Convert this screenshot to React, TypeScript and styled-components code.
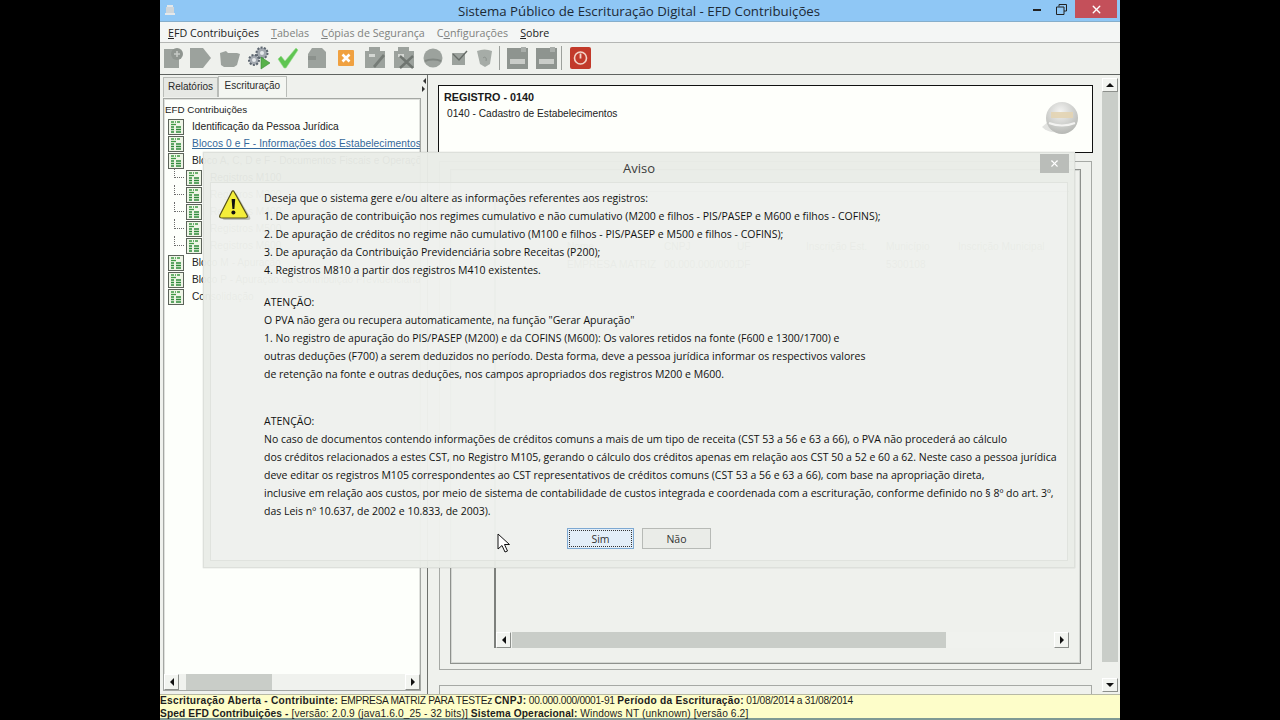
import React from 'react';
import styled, { createGlobalStyle } from 'styled-components';
import { X } from 'lucide-react';

const GlobalStyle = createGlobalStyle`
  html, body {
    margin: 0;
    padding: 0;
    background: #000;
    overflow: hidden;
  }
  * {
    box-sizing: border-box;
  }
`;

const UI_FONT = `"Open Sans", "Noto Sans", sans-serif`;
const SWING_FONT = `"Liberation Sans", Arial, sans-serif`;

const Window = styled.div`
  position: relative;
  width: 960px;
  height: 720px;
  margin: 0 auto;
  display: flex;
  flex-direction: column;
  background: #eff1ed;
  overflow: hidden;
  font-family: ${SWING_FONT};
`;

const TitleBar = styled.div`
  position: relative;
  height: 22px;
  flex: none;
  display: flex;
  align-items: center;
  justify-content: center;
  padding-right: 2px;
  background: #8fc7f5;
  border-bottom: 1px solid #86aecb;
  color: #1d2a35;
  font-family: ${UI_FONT};
  font-size: 13.25px;
`;

const AppGlyph = styled.svg`
  position: absolute;
  left: 5px;
  top: 4px;
`;

const WindowControls = styled.div`
  position: absolute;
  right: 3px;
  top: 0;
  height: 18px;
  display: flex;
  align-items: center;
  gap: 8px;
`;

const MinimizeGlyph = styled.svg`
  display: block;
  margin-right: 7px;
`;

const RestoreGlyph = styled.svg`
  display: block;
`;

const CloseControl = styled.div`
  width: 42px;
  height: 18px;
  display: flex;
  align-items: center;
  justify-content: center;
  background: #c4505a;
  color: #fff;
`;

const MenuBar = styled.div`
  height: 20px;
  flex: none;
  display: flex;
  align-items: center;
  gap: 12px;
  padding: 1px 0 0 8px;
  background: #f4f6f5;
  font-family: ${UI_FONT};
  font-size: 10.7px;
`;

const MenuItem = styled.span<{ $off?: boolean }>`
  color: ${({ $off }) => ($off ? '#7f8280' : '#222')};
  u {
    text-underline-offset: 1px;
  }
`;

const ToolBar = styled.div`
  height: 32px;
  flex: none;
  display: flex;
  align-items: center;
  border-top: 1px solid #b4b6b4;
  padding-bottom: 2px;
  background: #eff1ed;
`;

const ToolSlot = styled.div<{ $w: number }>`
  width: ${({ $w }) => $w}px;
  flex: none;
  display: flex;
  justify-content: center;
  align-items: center;
`;

const ToolSep = styled.div`
  width: 1px;
  height: 24px;
  flex: none;
  background: #9ca09c;
`;

const Main = styled.div`
  flex: 1;
  min-height: 0;
  display: flex;
  border-top: 1px solid #5f6360;
`;

const LeftPane = styled.div`
  width: 262px;
  flex: none;
  display: flex;
  flex-direction: column;
  padding: 1px 0 3px 3px;
`;

const Tabs = styled.div`
  display: flex;
  align-items: flex-end;
  height: 21px;
  flex: none;
`;

const Tab = styled.div<{ $active?: boolean }>`
  height: ${({ $active }) => ($active ? '21px' : '20px')};
  display: flex;
  align-items: center;
  padding: 0 ${({ $active }) => ($active ? '5.5px' : '4px')} 3px;
  font-size: 10px;
  color: #2a2a2a;
  border: 1px solid #b9bcb8;
  border-bottom: none;
  background: ${({ $active }) => ($active ? '#f4f6f2' : '#e6e8e4')};
`;

const TreeBox = styled.div`
  flex: 1;
  min-height: 0;
  margin-top: 1px;
  width: 258px;
  display: flex;
  flex-direction: column;
  background: #fdfffb;
  border: 1px solid #a5a8a4;
  box-shadow: inset 0 0 0 1px #dfe1dd;
`;

const TreeList = styled.div`
  flex: 1;
  min-height: 0;
  overflow: hidden;
  padding: 2px 0 0 1px;
  font-size: 10.2px;
  color: #222;
`;

const TreeRoot = styled.div`
  height: 17px;
  display: flex;
  align-items: center;
  font-size: 9.8px;
`;

const TreeRow = styled.div<{ $child?: boolean }>`
  position: relative;
  height: 17px;
  display: flex;
  align-items: center;
  gap: 8px;
  white-space: nowrap;
  padding-left: ${({ $child }) => ($child ? '21px' : '3px')};
`;

const TreeLink = styled.span`
  flex: 1;
  overflow: hidden;
  color: #34689b;
  text-decoration: underline;
  letter-spacing: 0.1px;
`;

const TreeLabel = styled.span``;

const Connector = styled.i`
  position: absolute;
  left: 9px;
  top: -1px;
  bottom: 8px;
  width: 10px;
  border-left: 1px dotted #6b6b6b;
  border-bottom: 1px dotted #6b6b6b;
`;

const TreeIconBox = styled.svg`
  flex: none;
  display: block;
`;

const HScroll = styled.div`
  height: 16px;
  flex: none;
  display: flex;
  align-items: stretch;
  background: #f0f2ee;
`;

const HScrollSpace = styled.div<{ $offset: number }>`
  flex: 1;
  padding-left: ${({ $offset }) => $offset}px;
  display: flex;
  min-width: 0;
`;

const HThumb = styled.div<{ $w: number }>`
  width: ${({ $w }) => $w}px;
  background: #c9cdc8;
`;

const ScrollBtn = styled.div<{ $dir: 'left' | 'right' | 'up' | 'down' }>`
  width: 15px;
  height: 100%;
  flex: none;
  display: flex;
  align-items: center;
  justify-content: center;
  background: #f2f4f0;
  border: 1px solid #fff;
  border-right-color: #8c8f8b;
  border-bottom-color: #8c8f8b;
  &::after {
    content: '';
    width: 0;
    height: 0;
    border-style: solid;
    border-color: transparent;
    border-width: ${({ $dir }) =>
      $dir === 'left' || $dir === 'right' ? '4px 0 4px 0' : '0 4px 0 4px'};
    ${({ $dir }) => $dir === 'left' && 'border-right: 4px solid #111;'}
    ${({ $dir }) => $dir === 'right' && 'border-left: 4px solid #111;'}
    ${({ $dir }) => $dir === 'up' && 'border-bottom: 4px solid #111;'}
    ${({ $dir }) => $dir === 'down' && 'border-top: 4px solid #111;'}
  }
`;

const Splitter = styled.div`
  width: 6px;
  flex: none;
  display: flex;
  flex-direction: column;
  align-items: flex-start;
  gap: 2px;
  padding-top: 3px;
  border-right: 1px solid #6d706c;
`;

const SplitArrow = styled.i<{ $right?: boolean }>`
  width: 0;
  height: 0;
  border-style: solid;
  border-color: transparent;
  border-width: 3px 0;
  ${({ $right }) =>
    $right ? 'border-left: 3px solid #333;' : 'border-right: 3px solid #333; margin-left: 1px;'}
`;

const RightPane = styled.div`
  flex: 1;
  min-width: 0;
  display: flex;
`;

const ContentArea = styled.div`
  flex: 1;
  min-width: 0;
  overflow: hidden;
  padding: 10px 0 0 10px;
  display: flex;
  flex-direction: column;
`;

const RecordHeader = styled.div`
  width: 655px;
  height: 68px;
  flex: none;
  position: relative;
  padding: 5px 5px;
  background: #fefffb;
  border: 1px solid #111;
`;

const RecordTitle = styled.div`
  font-size: 10.8px;
  font-weight: 700;
  color: #1a1a1a;
`;

const RecordSub = styled.div`
  margin: 5px 0 0 3px;
  font-size: 10.2px;
  color: #222;
`;

const Sphere = styled.svg`
  position: absolute;
  right: 11px;
  top: 15px;
`;

const OuterFrame = styled.div`
  width: 653px;
  height: 509px;
  flex: none;
  margin: 8px 0 0 1px;
  padding: 7px 9px 5px 10px;
  border: 1px solid #a6a9a5;
`;

const InnerFrame = styled.div`
  width: 631px;
  height: 100%;
  padding: 21px 11px 15px 43px;
  background: #eff1ed;
  border: 1px solid #8e918d;
  box-shadow: inset 0 0 0 1px #d4d7d3;
  display: flex;
`;

const GridFrame = styled.div`
  flex: 1;
  min-width: 0;
  display: flex;
  flex-direction: column;
  border-left: 2px solid #7d807c;
  border-top: 1px solid #9a9d99;
`;

const GridBody = styled.div`
  flex: 1;
  min-height: 0;
  padding: 45px 0 0 71px;
  font-size: 10.2px;
  color: #333;
`;

const GridRow = styled.div`
  display: grid;
  grid-template-columns: 97px 73px 69px 80px 72px 1fr;
  height: 18px;
  align-items: center;
  white-space: nowrap;
  span {
    overflow: hidden;
  }
`;

const NextFrame = styled.div`
  width: 653px;
  height: 20px;
  flex: none;
  margin: 15px 0 0 1px;
  border: 1px solid #a6a9a5;
`;

const VScroll = styled.div`
  width: 16px;
  flex: none;
  margin-right: 2px;
  padding-top: 3px;
  padding-bottom: 2px;
  display: flex;
  flex-direction: column;
`;

const VBtn = styled(ScrollBtn)`
  width: 100%;
  height: 14px;
`;

const VThumb = styled.div`
  height: 570px;
  flex: none;
  background: #c9cdc8;
`;

const VTrack = styled.div`
  flex: 1;
  background: #eff1ed;
`;

const StatusBar = styled.div`
  height: 26px;
  flex: none;
  background: #fdfdc9;
  border-top: 1px solid #b7b9a5;
  border-bottom: 2px solid #7f9a94;
  font-size: 10.2px;
  line-height: 13px;
  color: #1d1d1d;
  white-space: nowrap;
  b {
    font-weight: 700;
  }
`;

const StatusFirstLine = styled.div`
  margin-top: -1px;
  letter-spacing: -0.3px;
  b {
    letter-spacing: 0.25px;
  }
`;

const StatusSecondLine = styled.div`
  letter-spacing: 0.12px;
`;

const Dialog = styled.div`
  position: absolute;
  left: 43px;
  top: 152px;
  width: 872px;
  height: 416px;
  padding: 0 6px 6px;
  display: flex;
  flex-direction: column;
  background: rgba(233, 236, 231, 0.96);
  border: 1px solid #dde0db;
  box-shadow: 0 0 1px rgba(150, 150, 150, 0.5);
`;

const DialogTitle = styled.div`
  position: relative;
  height: 29px;
  flex: none;
  display: flex;
  align-items: center;
  justify-content: center;
  font-family: ${UI_FONT};
  font-size: 13px;
  color: #3b3b3b;
`;

const DialogClose = styled.div`
  position: absolute;
  right: -1px;
  top: 1px;
  width: 29px;
  height: 19px;
  display: flex;
  align-items: center;
  justify-content: center;
  background: #babdb9;
  color: #fff;
`;

const DialogBody = styled.div`
  flex: 1;
  min-height: 0;
  display: flex;
  flex-direction: column;
  padding: 5px 0 0 8px;
  background: rgba(255, 255, 255, 0.25);
  border: 1px solid #e0e3de;
`;

const MessageRow = styled.div`
  display: flex;
  gap: 11px;
  flex: none;
`;

const WarnIcon = styled.svg`
  flex: none;
  margin-top: 2px;
`;

const Message = styled.div`
  padding-top: 1px;
  font-family: ${UI_FONT};
  font-size: 10.5px;
  line-height: 18px;
  color: #111;
  white-space: nowrap;
`;

const Paragraph = styled.div<{ $gap?: number }>`
  margin-top: ${({ $gap }) => $gap ?? 0}px;
`;

const DialogActions = styled.div`
  display: flex;
  justify-content: center;
  gap: 8px;
  margin-top: 8px;
  padding-right: 8px;
`;

const DialogButton = styled.div<{ $focus?: boolean }>`
  width: ${({ $focus }) => ($focus ? '67px' : '69px')};
  height: 21px;
  display: flex;
  align-items: center;
  justify-content: center;
  font-family: ${UI_FONT};
  font-size: 10.5px;
  color: #333;
  background: ${({ $focus }) => ($focus ? '#e3eef8' : '#eaece8')};
  border: 1px solid ${({ $focus }) => ($focus ? '#7ea9d2' : '#b7bab6')};
  outline: ${({ $focus }) => ($focus ? '1px dotted #333' : 'none')};
  outline-offset: -3px;
`;

const Pointer = styled.svg`
  position: absolute;
  left: 337px;
  top: 533px;
`;

const TreeIcon = () => (
  <TreeIconBox width="16" height="16" viewBox="0 0 16 16">
    <rect x="0.5" y="0.5" width="15" height="15" fill="#eef5e6" stroke="#5c635a" />
    <path d="M3 3h3M7 3h1M9 3h3" stroke="#3f9a45" strokeWidth="1.3" />
    <path d="M3 5.5h5" stroke="#3f9a45" strokeWidth="1.3" />
    <path d="M3 8h3M8 8h5M3 10.5h3M8 10.5h5M3 13h3M8 13h5" stroke="#2f8a3b" strokeWidth="1.3" />
  </TreeIconBox>
);

const GRAY = '#9ca29d';

function FloppyIcon() {
  return (
    <svg width="21" height="22" viewBox="0 0 21 22">
      <path d="M0 1h21v21H0z" fill="#8e948f" />
      <path d="M14 0h5v5h-5z" fill="#a9aeaa" />
      <path d="M3 12h15v5H3z" fill="#c9ccc8" />
    </svg>
  );
}

const toolIcons: { w: number; node?: React.ReactNode; sep?: boolean }[] = [
  {
    w: 26,
    node: (
      <svg width="22" height="24" viewBox="0 0 22 24">
        <path d="M2 3h10l5 5v14H2z" fill={GRAY} />
        <circle cx="15" cy="8" r="6" fill="#8f9590" />
        <path d="M12 8h6M15 5v6" stroke="#c5c9c5" strokeWidth="1.6" />
      </svg>
    ),
  },
  {
    w: 29,
    node: (
      <svg width="23" height="22" viewBox="0 0 23 22">
        <path d="M1 1h13l8 10-8 10H1z" fill={GRAY} />
      </svg>
    ),
  },
  {
    w: 29,
    node: (
      <svg width="22" height="20" viewBox="0 0 22 20">
        <path d="M1 5l6-2 2 2h9l3 1-3 11-3 2H5l-3-2z" fill={GRAY} />
      </svg>
    ),
  },
  {
    w: 29,
    node: (
      <svg width="24" height="24" viewBox="0 0 24 24">
        <circle cx="15" cy="7" r="5.5" fill="#a3a9b0" stroke="#5d6670" strokeDasharray="2 1.4" strokeWidth="2" />
        <circle cx="15" cy="7" r="2" fill="#e6e9ec" />
        <circle cx="7" cy="14" r="5" fill="#a3a9b0" stroke="#5d6670" strokeDasharray="2 1.4" strokeWidth="2" />
        <circle cx="7" cy="14" r="2" fill="#e6e9ec" />
        <path d="M14 11l9 6-9 6z" fill="#58b14a" stroke="#3a8a35" strokeWidth="0.6" />
      </svg>
    ),
  },
  {
    w: 29,
    node: (
      <svg width="22" height="22" viewBox="0 0 22 22">
        <path d="M1 12l3-3 4 5L19 1l2 2L9 21h-2z" fill="#5fc552" stroke="#9bdc8f" strokeWidth="0.6" />
      </svg>
    ),
  },
  {
    w: 29,
    node: (
      <svg width="20" height="22" viewBox="0 0 20 22">
        <path d="M5 1h10l4 4v16H1V7z" fill={GRAY} />
        <path d="M1 9h8v4H1z" fill="#8b918c" />
      </svg>
    ),
  },
  {
    w: 29,
    node: (
      <svg width="16" height="16" viewBox="0 0 16 16">
        <rect width="16" height="16" rx="1" fill="#f0a140" />
        <path d="M4.5 4.5l7 7M11.5 4.5l-7 7" stroke="#fff" strokeWidth="2.6" />
      </svg>
    ),
  },
  {
    w: 29,
    node: (
      <svg width="22" height="23" viewBox="0 0 22 23">
        <path d="M1 5h4V1h11v4h5v17H1z" fill={GRAY} />
        <path d="M5 8h6v3H5z" fill="#d4d7d3" />
        <path d="M9 20l10-12 2 2-10 12z" fill="#767c77" />
      </svg>
    ),
  },
  {
    w: 29,
    node: (
      <svg width="22" height="23" viewBox="0 0 22 23">
        <path d="M1 5h4V1h11v4h5v17H1z" fill={GRAY} />
        <path d="M5 8h6v3H5z" fill="#d4d7d3" />
        <path d="M7 10l13 12M20 10L7 22" stroke="#6f7570" strokeWidth="2.4" />
      </svg>
    ),
  },
  {
    w: 29,
    node: (
      <svg width="20" height="20" viewBox="0 0 20 20">
        <circle cx="10" cy="10" r="9.5" fill={GRAY} />
        <path d="M2 13c4-2 12-2 16 0" stroke="#818782" fill="none" strokeWidth="2" />
      </svg>
    ),
  },
  {
    w: 25,
    node: (
      <svg width="16" height="15" viewBox="0 0 16 15">
        <path d="M0 3h13v12H0z" fill={GRAY} />
        <path d="M1 4l6 6 8-9" stroke="#666c67" strokeWidth="1.4" fill="none" />
      </svg>
    ),
  },
  {
    w: 25,
    node: (
      <svg width="15" height="18" viewBox="0 0 15 18">
        <path d="M0 2c5-2 10-2 15 0l-2 13-5 3-5-3z" fill="#a6aca7" />
        <path d="M6 9c2-2 4 0 3 3" stroke="#8b918c" fill="none" />
      </svg>
    ),
  },
  { w: 2 },
  { w: 1, sep: true },
  { w: 3 },
  { w: 29, node: <FloppyIcon /> },
  { w: 29, node: <FloppyIcon /> },
  { w: 1, sep: true },
  { w: 6 },
  {
    w: 25,
    node: (
      <svg width="21" height="22" viewBox="0 0 21 22">
        <rect width="21" height="22" rx="2" fill="#c23a2a" />
        <circle cx="10.5" cy="11" r="6" fill="none" stroke="#f3d5c8" strokeWidth="1.6" />
        <path d="M10.5 6.5v5" stroke="#f3d5c8" strokeWidth="1.8" />
      </svg>
    ),
  },
];

const treeRows = [
  { label: 'Identificação da Pessoa Jurídica' },
  { label: 'Blocos 0 e F - Informações dos Estabelecimentos e Fontes Pagadoras', link: true },
  { label: 'Bloco A, C, D e F - Documentos Fiscais e Operações' },
  { label: 'Registros M100', child: true },
  { label: 'Registros M200', child: true },
  { label: 'Registros M400', child: true },
  { label: 'Registros M500', child: true },
  { label: 'Registros M600', child: true },
  { label: 'Bloco M - Apuração' },
  { label: 'Bloco P - Apuração da Contribuição Previdenciária' },
  { label: 'Consolidação' },
];

const intro = [
  'Deseja que o sistema gere e/ou altere as informações referentes aos registros:',
  '1. De apuração de contribuição nos regimes cumulativo e não cumulativo (M200 e filhos - PIS/PASEP e M600 e filhos - COFINS);',
  '2. De apuração de créditos no regime não cumulativo (M100 e filhos - PIS/PASEP e M500 e filhos - COFINS);',
  '3. De apuração da Contribuição Previdenciária sobre Receitas (P200);',
  '4. Registros M810 a partir dos registros M410 existentes.',
];

const firstNote = [
  'ATENÇÃO:',
  'O PVA não gera ou recupera automaticamente, na função "Gerar Apuração"',
  '1. No registro de apuração do PIS/PASEP (M200) e da COFINS (M600): Os valores retidos na fonte (F600 e 1300/1700) e',
  'outras deduções (F700) a serem deduzidos no período. Desta forma, deve a pessoa jurídica informar os respectivos valores',
  'de retenção na fonte e outras deduções, nos campos apropriados dos registros M200 e M600.',
];

const secondNote = [
  'ATENÇÃO:',
  'No caso de documentos contendo informações de créditos comuns a mais de um tipo de receita (CST 53 a 56 e 63 a 66), o PVA não procederá ao cálculo',
  'dos créditos relacionados a estes CST, no Registro M105, gerando o cálculo dos créditos apenas em relação aos CST 50 a 52 e 60 a 62. Neste caso a pessoa jurídica',
  'deve editar os registros M105 correspondentes ao CST representativos de créditos comuns (CST 53 a 56 e 63 a 66), com base na apropriação direta,',
  'inclusive em relação aos custos, por meio de sistema de contabilidade de custos integrada e coordenada com a escrituração, conforme definido no § 8º do art. 3º,',
  'das Leis nº 10.637, de 2002 e 10.833, de 2003).',
];

export default function App() {
  return (
    <>
      <GlobalStyle />
      <Window>
        <TitleBar>
          <AppGlyph width="10" height="12" viewBox="0 0 10 12">
            <path d="M1 3h8v6H1z" fill="#cfd6da" />
            <path d="M2 1h6v2H2zM0 9h10v2H0z" fill="#e4e8ea" />
          </AppGlyph>
          Sistema Público de Escrituração Digital - EFD Contribuições
          <WindowControls>
            <MinimizeGlyph width="8" height="3" viewBox="0 0 8 3">
              <rect width="8" height="2" y="1" fill="#222" />
            </MinimizeGlyph>
            <RestoreGlyph width="11" height="11" viewBox="0 0 11 11">
              <path d="M3 2.5V.5h7.5v6.5H8M.5 3h7.5v7.5H.5z" fill="none" stroke="#222" />
            </RestoreGlyph>
            <CloseControl>
              <X size={13} strokeWidth={2.6} />
            </CloseControl>
          </WindowControls>
        </TitleBar>

        <MenuBar>
          <MenuItem><u>E</u>FD Contribuições</MenuItem>
          <MenuItem $off><u>T</u>abelas</MenuItem>
          <MenuItem $off><u>C</u>ópias de Segurança</MenuItem>
          <MenuItem $off>C<u>o</u>nfigurações</MenuItem>
          <MenuItem><u>S</u>obre</MenuItem>
        </MenuBar>

        <ToolBar>
          {toolIcons.map((tool, i) =>
            tool.sep ? <ToolSep key={i} /> : <ToolSlot key={i} $w={tool.w}>{tool.node}</ToolSlot>
          )}
        </ToolBar>

        <Main>
          <LeftPane>
            <Tabs>
              <Tab>Relatórios</Tab>
              <Tab $active>Escrituração</Tab>
            </Tabs>
            <TreeBox>
              <TreeList>
                <TreeRoot>EFD Contribuições</TreeRoot>
                {treeRows.map((row) => (
                  <TreeRow key={row.label} $child={row.child}>
                    {row.child && <Connector />}
                    <TreeIcon />
                    {row.link ? <TreeLink>{row.label}</TreeLink> : <TreeLabel>{row.label}</TreeLabel>}
                  </TreeRow>
                ))}
              </TreeList>
              <HScroll>
                <ScrollBtn $dir="left" />
                <HScrollSpace $offset={7}>
                  <HThumb $w={86} />
                </HScrollSpace>
                <ScrollBtn $dir="right" />
              </HScroll>
            </TreeBox>
          </LeftPane>

          <Splitter>
            <SplitArrow />
            <SplitArrow $right />
          </Splitter>

          <RightPane>
            <ContentArea>
              <RecordHeader>
                <RecordTitle>REGISTRO - 0140</RecordTitle>
                <RecordSub>0140 - Cadastro de Estabelecimentos</RecordSub>
                <Sphere width="40" height="36" viewBox="0 0 40 36">
                  <defs>
                    <radialGradient id="ball" cx="0.45" cy="0.3" r="0.8">
                      <stop offset="0" stopColor="#f4f4f2" />
                      <stop offset="1" stopColor="#aeb0ac" />
                    </radialGradient>
                  </defs>
                  <path d="M1 26c6 6 14 6 20 4L8 20z" fill="#e2e3e0" />
                  <circle cx="21" cy="17" r="16" fill="url(#ball)" />
                  <path d="M10 11h22v6H10z" fill="#e3d4b2" opacity="0.9" />
                  <path d="M8 22c8 3 18 3 26 0" stroke="#f3f3f1" strokeWidth="2" fill="none" />
                </Sphere>
              </RecordHeader>
              <OuterFrame>
                <InnerFrame>
                  <GridFrame>
                    <GridBody>
                      <GridRow>
                        <span>Nome</span>
                        <span>CNPJ</span>
                        <span>UF</span>
                        <span>Inscrição Est.</span>
                        <span>Município</span>
                        <span>Inscrição Municipal</span>
                      </GridRow>
                      <GridRow>
                        <span>EMPRESA MATRIZ</span>
                        <span>00.000.000/0001-91</span>
                        <span>DF</span>
                        <span />
                        <span>5300108</span>
                        <span />
                      </GridRow>
                    </GridBody>
                    <HScroll>
                      <ScrollBtn $dir="left" />
                      <HScrollSpace $offset={1}>
                        <HThumb $w={434} />
                      </HScrollSpace>
                      <ScrollBtn $dir="right" />
                    </HScroll>
                  </GridFrame>
                </InnerFrame>
              </OuterFrame>
              <NextFrame />
            </ContentArea>
            <VScroll>
              <VBtn $dir="up" />
              <VThumb />
              <VTrack />
              <VBtn $dir="down" />
            </VScroll>
          </RightPane>
        </Main>

        <StatusBar>
          <StatusFirstLine>
            <b>Escrituração Aberta - Contribuinte:</b> EMPRESA MATRIZ PARA TESTEz <b>CNPJ:</b> 00.000.000/0001-91{' '}
            <b>Período da Escrituração:</b> 01/08/2014 a 31/08/2014
          </StatusFirstLine>
          <StatusSecondLine>
            <b>Sped EFD Contribuições -</b> [versão: 2.0.9 (java1.6.0_25 - 32 bits)] <b>Sistema Operacional:</b> Windows
            NT (unknown) [versão 6.2]
          </StatusSecondLine>
        </StatusBar>

        <Dialog>
          <DialogTitle>
            Aviso
            <DialogClose>
              <X size={11} strokeWidth={2.4} />
            </DialogClose>
          </DialogTitle>
          <DialogBody>
            <MessageRow>
              <WarnIcon width="34" height="32" viewBox="0 0 34 32">
                <path d="M17 3L31 27c1 2 0 3-2 3H6c-2 0-3-1-2-3z" fill="#8c8f8a" opacity="0.5" />
                <path d="M15 1.5L28 25c1 2 0 3-2 3H3c-2 0-3-1-2-3L13 1.5c.5-1 1.5-1 2 0z" fill="#f4ee3a" stroke="#55501a" strokeWidth="1.2" />
                <path d="M12.6 9h3.6l-.8 10h-2z" fill="#111" />
                <circle cx="14.4" cy="22.5" r="2" fill="#111" />
              </WarnIcon>
              <Message>
                <Paragraph>
                  {intro.map((line) => <div key={line}>{line}</div>)}
                </Paragraph>
                <Paragraph $gap={14}>
                  {firstNote.map((line) => <div key={line}>{line}</div>)}
                </Paragraph>
                <Paragraph $gap={29}>
                  {secondNote.map((line) => <div key={line}>{line}</div>)}
                </Paragraph>
              </Message>
            </MessageRow>
            <DialogActions>
              <DialogButton $focus>Sim</DialogButton>
              <DialogButton>Não</DialogButton>
            </DialogActions>
          </DialogBody>
        </Dialog>

        <Pointer width="14" height="20" viewBox="0 0 14 20">
          <path d="M1 1v15l4-3.5 3 6.5 2.5-1-3-6.5h5z" fill="#fff" stroke="#111" strokeWidth="1" />
        </Pointer>
      </Window>
    </>
  );
}
